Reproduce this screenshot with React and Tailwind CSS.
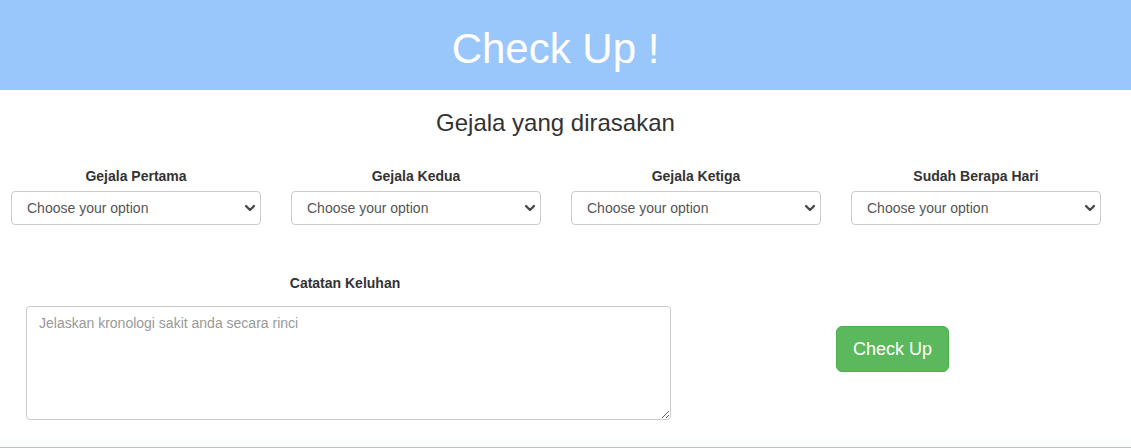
const symptoms = [
  'Gejala Pertama',
  'Gejala Kedua',
  'Gejala Ketiga',
  'Sudah Berapa Hari',
];

const SelectBox = ({ label }) => (
  <div className="flex w-[250px] flex-col items-center">
    <label className="text-[14px] font-bold leading-[20px] text-[#333]">{label}</label>
    <div className="relative mt-[5px] w-full">
      <select
        defaultValue=""
        className="h-[34px] w-full appearance-none rounded-[4px] border border-[#ccc] bg-white pl-[15px] pr-8 text-[14px] text-[#555] outline-none"
      >
        <option value="">Choose your option</option>
        <option value="1">1</option>
        <option value="2">2</option>
      </select>
      <svg
        className="pointer-events-none absolute right-[5px] top-[12px]"
        width="12"
        height="10"
        viewBox="0 0 12 10"
        fill="none"
        stroke="#444"
        strokeWidth="2.2"
        strokeLinecap="round"
        strokeLinejoin="round"
      >
        <path d="M2 3l4 4 4-4" />
      </svg>
    </div>
  </div>
);

export default function App() {
  return (
    <div className="min-h-[448px] bg-white font-['Liberation_Sans',Arial,sans-serif]">
      {/* Header */}
      <div className="flex h-[90px] items-center justify-center bg-[#9ac7fb] pr-[20px] pt-[7px]">
        <h1 className="text-[42px] leading-none text-white">Check Up !</h1>
      </div>

      <h2 className="pr-[20px] pt-[20px] text-center text-[24px] leading-[26px] text-[#333]">
        Gejala yang dirasakan
      </h2>

      {/* Pilihan gejala */}
      <div className="mt-[30px] flex gap-[30px] pl-[11px]">
        {symptoms.map((s) => (
          <SelectBox key={s} label={s} />
        ))}
      </div>

      {/* Catatan + tombol */}
      <div className="mt-[48px] flex">
        <div className="flex w-[690px] flex-col">
          <label className="text-center text-[14px] font-bold leading-[20px] text-[#333]">
            Catatan Keluhan
          </label>
          <textarea
            placeholder="Jelaskan kronologi sakit anda secara rinci"
            className="ml-[26px] mt-[13px] h-[114px] w-[645px] rounded-[4px] border border-[#ccc] px-[12px] py-[6px] text-[14px] leading-[20px] text-[#555] outline-none placeholder:text-[#999]"
          />
        </div>
        <div className="pt-[53px]">
          <button className="ml-[146px] h-[46px] w-[113px] rounded-[6px] border border-[#4cae4c] bg-[#5cb85c] text-[18px] text-white">
            Check Up
          </button>
        </div>
      </div>

      <div className="mt-[27px] h-px bg-[#9ac7fb]" />
    </div>
  );
}
